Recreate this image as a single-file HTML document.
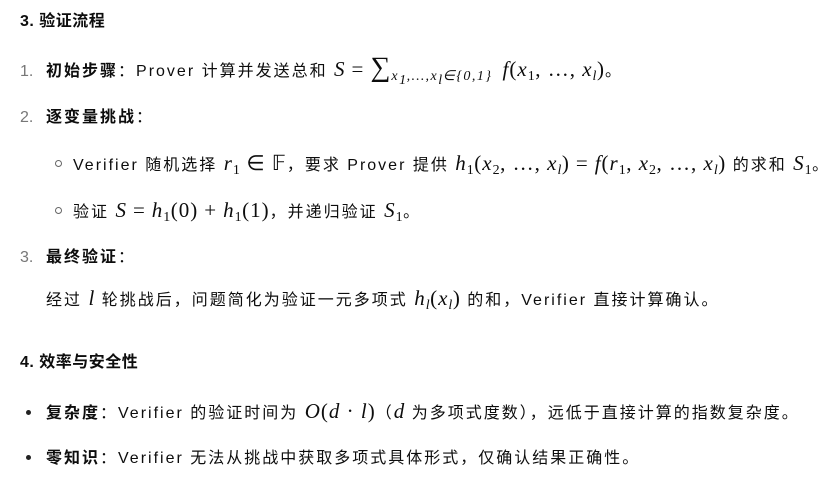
<!DOCTYPE html>
<html><head><meta charset="utf-8"><style>
body{margin:0;width:832px;height:488px;background:#fff;color:#0d0d0d;font-family:"Liberation Sans","Noto Sans CJK SC",sans-serif;font-size:16px;letter-spacing:2px;position:relative;overflow:hidden}
.l{position:absolute;white-space:nowrap;line-height:24px}
b{font-weight:700}
.m{font-family:"Liberation Serif",serif;font-size:21px;letter-spacing:1px}
.i{font-style:italic}
.n{color:#777;display:inline-block;width:26px;letter-spacing:0}
sub{font-size:14px;vertical-align:-4px;line-height:0;letter-spacing:0.5px}
.o{padding:0 6px}
.h{font-weight:700;font-size:16px;letter-spacing:0.5px}
.c{display:inline-block;width:5px;height:5px;border:1px solid #666;border-radius:50%;margin-right:11px;vertical-align:3px}
.d{display:inline-block;width:5px;height:5px;background:#222;border-radius:50%;margin-right:15px;vertical-align:3px}
</style></head><body>
<div class="l h" style="left:20px;top:10px">3. 验证流程</div>
<div class="l" style="left:20px;top:56px"><span class="n">1.</span><b>初始步骤</b>：Prover 计算并发送总和 <span class="m"><span class="i">S</span><span class="o">=</span><span style="font-size:28px">∑</span><sub class="i" style="letter-spacing:1.5px">x<sub>1</sub>,…,x<sub>l</sub>∈{0,1}</sub><span style="padding-left:10px" class="i">f</span>(<span class="i">x</span><sub>1</sub>, …, <span class="i">x<sub>l</sub></span>)</span>。</div>
<div class="l" style="left:20px;top:106px"><span class="n">2.</span><b>逐变量挑战</b>：</div>
<div class="l" style="left:55px;top:151px"><span class="c"></span>Verifier 随机选择 <span class="m"><span class="i">r</span><sub>1</sub><span class="o">∈</span>𝔽</span>，要求 Prover 提供 <span class="m"><span class="i">h</span><sub>1</sub>(<span class="i">x</span><sub>2</sub>, …, <span class="i">x<sub>l</sub></span>)<span class="o">=</span><span class="i">f</span>(<span class="i">r</span><sub>1</sub>, <span class="i">x</span><sub>2</sub>, …, <span class="i">x<sub>l</sub></span>)</span> 的求和 <span class="m"><span class="i">S</span><sub>1</sub></span>。</div>
<div class="l" style="left:55px;top:198px"><span class="c"></span>验证 <span class="m"><span class="i">S</span><span class="o">=</span><span class="i">h</span><sub>1</sub>(0)<span class="o">+</span><span class="i">h</span><sub>1</sub>(1)</span>，并递归验证 <span class="m"><span class="i">S</span><sub>1</sub></span>。</div>
<div class="l" style="left:20px;top:246px"><span class="n">3.</span><b>最终验证</b>：</div>
<div class="l" style="left:46px;top:286px">经过 <span class="m i">l</span> 轮挑战后，问题简化为验证一元多项式 <span class="m"><span class="i">h<sub>l</sub></span>(<span class="i">x<sub>l</sub></span>)</span> 的和，Verifier 直接计算确认。</div>
<div class="l h" style="left:20px;top:351px">4. 效率与安全性</div>
<div class="l" style="left:26px;top:399px"><span class="d"></span><b>复杂度</b>：Verifier 的验证时间为 <span class="m"><span class="i">O</span>(<span class="i">d</span> · <span class="i">l</span>)</span>（<span class="m i">d</span> 为多项式度数），远低于直接计算的指数复杂度。</div>
<div class="l" style="left:26px;top:447px"><span class="d"></span><b>零知识</b>：Verifier 无法从挑战中获取多项式具体形式，仅确认结果正确性。</div>
</body></html>
